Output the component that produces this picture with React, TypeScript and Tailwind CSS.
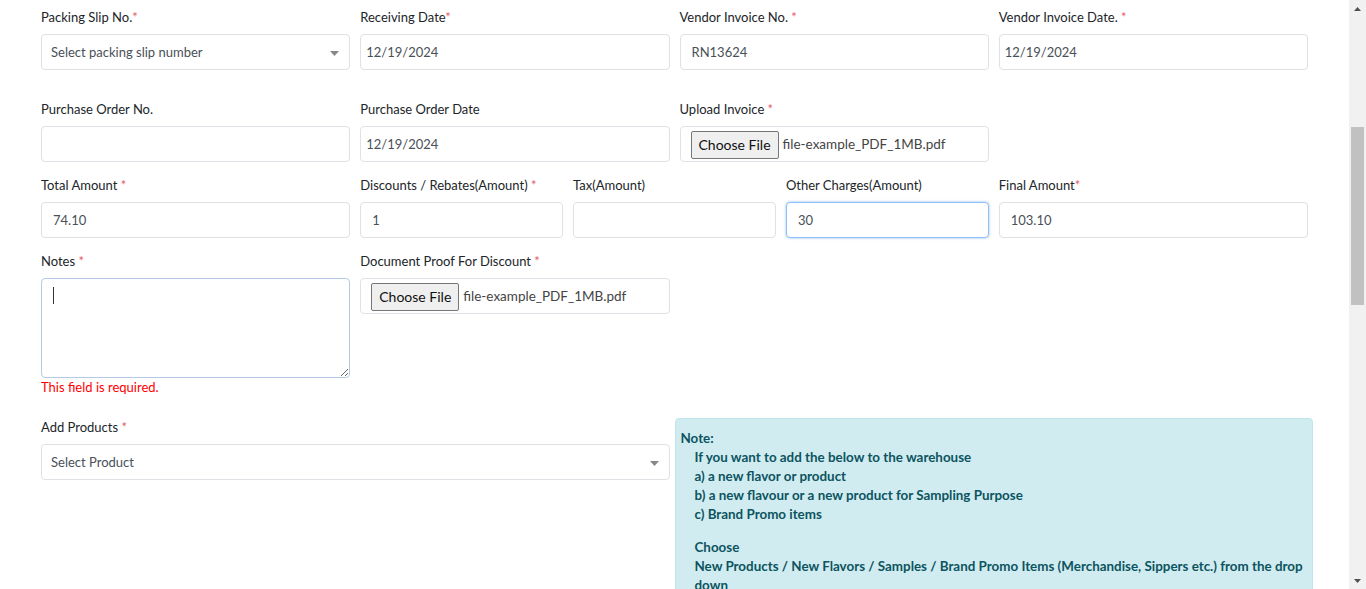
import React from "react";

const font = "font-['Lato','Liberation_Sans',sans-serif]";

const Req = ({ space = true }: { space?: boolean }) => (
  <span className="text-[#e35d6a]">{space ? " *" : "*"}</span>
);

const Label = ({ children }: { children: React.ReactNode }) => (
  <label className="block h-[20px] mb-[7px] text-[13px] leading-[20px] text-[#212529]">{children}</label>
);

const boxBase = "h-[36px] w-full rounded-[4px] border bg-white text-[13px] text-[#495057]";

const TextBox = ({ value, focus = false, date = false }: { value?: string; focus?: boolean; date?: boolean }) => (
  <div
    className={`${boxBase} flex items-center pt-[2px] ${date ? "px-[5px]" : "px-[11px]"} ${
      focus ? "border-[#8cc0f5] shadow-[0_0_2px_1px_rgba(56,140,230,0.25)]" : "border-[#dfe1e6]"
    }`}
  >
    {value}
  </div>
);

const SelectBox = ({ placeholder }: { placeholder: string }) => (
  <div className={`${boxBase} border-[#dfe1e6] flex items-center justify-between pt-[2px] pl-[9px] pr-[10px]`}>
    <span>{placeholder}</span>
    <svg width="9" height="5" viewBox="0 0 9 5">
      <path d="M0 0h9L4.5 5z" fill="#888" />
    </svg>
  </div>
);

const FileBox = () => (
  <div className={`${boxBase} border-[#dfe1e6] flex items-center pt-[1px] pl-[10px]`}>
    <button className="h-[28px] px-[7px] mr-[4px] rounded-[2px] border border-[#767676] bg-[#efefef] text-[14px] text-[#111]">
      Choose File
    </button>
    <span className="text-[13.5px] text-[#444]">file-example_PDF_1MB.pdf</span>
  </div>
);

export default function App() {
  return (
    <div className={`flex h-[589px] w-full overflow-hidden bg-white ${font}`}>
      <main className="flex-1 px-[36px] pt-[7px]">
        <div className="grid grid-cols-4 mb-[29px]">
          <div className="px-[5px]">
            <Label>Packing Slip No.<Req space={false} /></Label>
            <SelectBox placeholder="Select packing slip number" />
          </div>
          <div className="px-[5px]">
            <Label>Receiving Date<Req space={false} /></Label>
            <TextBox value="12/19/2024" date />
          </div>
          <div className="px-[5px]">
            <Label>Vendor Invoice No.<Req /></Label>
            <TextBox value="RN13624" />
          </div>
          <div className="px-[5px]">
            <Label>Vendor Invoice Date.<Req /></Label>
            <TextBox value="12/19/2024" date />
          </div>
        </div>

        <div className="grid grid-cols-4 mb-[13px]">
          <div className="px-[5px]">
            <Label>Purchase Order No.</Label>
            <TextBox />
          </div>
          <div className="px-[5px]">
            <Label>Purchase Order Date</Label>
            <TextBox value="12/19/2024" date />
          </div>
          <div className="px-[5px]">
            <Label>Upload Invoice<Req /></Label>
            <FileBox />
          </div>
        </div>

        <div className="grid grid-cols-4 mb-[13px]">
          <div className="px-[5px]">
            <Label>Total Amount<Req /></Label>
            <TextBox value="74.10" />
          </div>
          <div className="col-span-2 grid grid-cols-3">
            <div className="px-[5px]">
              <Label>Discounts / Rebates(Amount)<Req /></Label>
              <TextBox value="1" />
            </div>
            <div className="px-[5px]">
              <Label>Tax(Amount)</Label>
              <TextBox />
            </div>
            <div className="px-[5px]">
              <Label>Other Charges(Amount)</Label>
              <TextBox value="30" focus />
            </div>
          </div>
          <div className="px-[5px]">
            <Label>Final Amount<Req space={false} /></Label>
            <TextBox value="103.10" />
          </div>
        </div>

        <div className="grid grid-cols-4 mb-[19px]">
          <div className="px-[5px]">
            <Label>Notes<Req /></Label>
            <div className="relative">
              <textarea className="block h-[100px] w-full resize-y rounded-[4px] border border-[#b3cbe6] bg-white outline-none" />
              <span className="absolute left-[12px] top-[9px] h-[17px] w-px bg-[#333]" />
            </div>
            <p className="h-[20px] text-[13px] leading-[18px] text-[#f00]">This field is required.</p>
          </div>
          <div className="px-[5px]">
            <Label>Document Proof For Discount<Req /></Label>
            <FileBox />
          </div>
        </div>

        <div className="grid grid-cols-2">
          <div className="px-[5px]">
            <Label>Add Products<Req /></Label>
            <SelectBox placeholder="Select Product" />
          </div>
          <div className="mt-[1px] h-[300px] rounded-[4px] border border-[#bee5eb] bg-[#d1ecf1] pl-[5px] pt-[10px] text-[13.4px] font-bold leading-[19px] text-[#0c5460]">
            <p>Note:</p>
            <div className="pl-[14px] pr-[8px]">
              <p>If you want to add the below to the warehouse</p>
              <p>a) a new flavor or product</p>
              <p>b) a new flavour or a new product for Sampling Purpose</p>
              <p>c) Brand Promo items</p>
              <p className="mt-[14px]">Choose</p>
              <p>New Products / New Flavors / Samples / Brand Promo Items (Merchandise, Sippers etc.) from the drop down</p>
            </div>
          </div>
        </div>
      </main>

      <div className="flex w-[17px] flex-col bg-[#f1f1f1]">
        <div className="flex h-[17px] items-center justify-center">
          <svg width="7" height="4" viewBox="0 0 7 4">
            <path d="M0 4L3.5 0L7 4z" fill="#505050" />
          </svg>
        </div>
        <div className="mx-[2px] mt-[110px] h-[178px] bg-[#c1c1c1]" />
        <div className="flex-1" />
        <div className="flex h-[17px] items-center justify-center">
          <svg width="7" height="4" viewBox="0 0 7 4">
            <path d="M0 0h7L3.5 4z" fill="#505050" />
          </svg>
        </div>
      </div>
    </div>
  );
}
